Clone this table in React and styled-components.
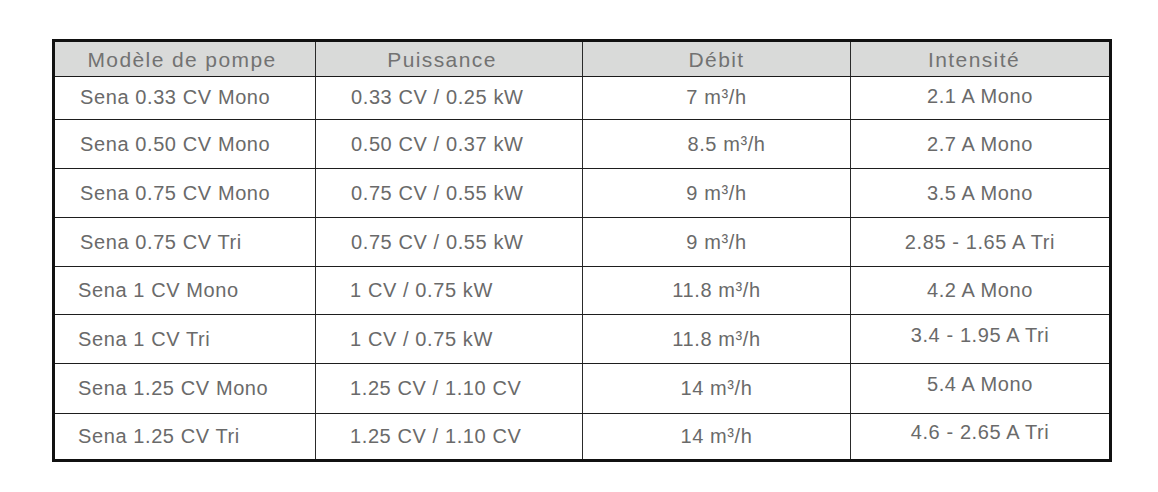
import React from "react";
import styled, { createGlobalStyle } from "styled-components";

const GlobalStyle = createGlobalStyle`
  html, body {
    margin: 0;
    padding: 0;
    background: #ffffff;
  }
  body {
    font-family: "Liberation Sans", Arial, Helvetica, sans-serif;
  }
`;

const Page = styled.div`
  width: 1158px;
  height: 492px;
  padding: 39px 0 0 52px;
  box-sizing: border-box;
  background: #ffffff;
`;

const Table = styled.table`
  width: 1057px;
  border-collapse: collapse;
  table-layout: fixed;
  border: 3px solid #111111;
  color: #6a6a6a;
`;

const HeadRow = styled.tr`
  height: 36px;
  background: #d9dad9;
`;

const Th = styled.th`
  font-weight: 400;
  font-size: 21px;
  letter-spacing: 1.4px;
  color: #727272;
  text-align: center;
  padding: 1px ${(p) => p.$shift || 0}px 0 0;
  border-right: 1.5px solid #2a2a2a;
  border-bottom: 1.5px solid #1a1a1a;
  white-space: nowrap;
`;

const Row = styled.tr`
  height: ${(p) => p.$h}px;
`;

const Td = styled.td`
  font-size: 20px;
  letter-spacing: 0.6px;
  text-align: ${(p) => p.$align || "center"};
  padding: 0 0 ${(p) => (p.$raise ? p.$raise * 2 : 0)}px
    ${(p) => p.$pad || 0}px;
  border-right: 1.5px solid #2a2a2a;
  border-bottom: 1.5px solid #1e1e1e;
  white-space: nowrap;
  vertical-align: middle;
`;

const rows = [
  { h: 43, model: "Sena 0.33 CV Mono", power: "0.33 CV / 0.25 kW", flow: "7 m³/h", amp: "2.1 A Mono", up: 2 },
  { h: 49, model: "Sena 0.50 CV Mono", power: "0.50 CV / 0.37 kW", flow: "8.5 m³/h", amp: "2.7 A Mono", flowShift: 20 },
  { h: 49, model: "Sena 0.75 CV Mono", power: "0.75 CV / 0.55 kW", flow: "9 m³/h", amp: "3.5 A Mono" },
  { h: 49, model: "Sena 0.75 CV Tri", power: "0.75 CV / 0.55 kW", flow: "9 m³/h", amp: "2.85 - 1.65 A Tri", flowDrop: 2 },
  { h: 48, model: "Sena 1 CV Mono", power: "1 CV / 0.75 kW", flow: "11.8 m³/h", amp: "4.2 A Mono", tight: true },
  { h: 49, model: "Sena 1 CV Tri", power: "1 CV / 0.75 kW", flow: "11.8 m³/h", amp: "3.4 - 1.95 A Tri", ampRaise: 4, tight: true },
  { h: 50, model: "Sena 1.25 CV Mono", power: "1.25 CV / 1.10 CV", flow: "14 m³/h", amp: "5.4 A Mono", ampRaise: 4, tight: true },
  { h: 47, model: "Sena 1.25 CV Tri", power: "1.25 CV / 1.10 CV", flow: "14 m³/h", amp: "4.6 - 2.65 A Tri", ampRaise: 4, tight: true },
];

export default function App() {
  return (
    <>
      <GlobalStyle />
      <Page>
        <Table>
          <colgroup>
            <col style={{ width: 262 }} />
            <col style={{ width: 267 }} />
            <col style={{ width: 268 }} />
            <col style={{ width: 260 }} />
          </colgroup>
          <thead>
            <HeadRow>
              <Th $shift={6}>Modèle de pompe</Th>
              <Th $shift={14}>Puissance</Th>
              <Th>Débit</Th>
              <Th $shift={12}>Intensité</Th>
            </HeadRow>
          </thead>
          <tbody>
            {rows.map((r) => (
              <Row key={r.model} $h={r.h}>
                <Td $align="left" $pad={r.tight ? 23 : 25} $raise={r.up ? 1 : 0}>
                  {r.model}
                </Td>
                <Td $align="left" $pad={r.tight ? 34 : 35} $raise={r.up ? 1 : 0}>
                  {r.power}
                </Td>
                <Td
                  $pad={r.flowShift || 0}
                  $raise={r.flowDrop ? -1 : r.up ? 1 : 0}
                >
                  {r.flow}
                </Td>
                <Td $raise={r.ampRaise || r.up || 0}>{r.amp}</Td>
              </Row>
            ))}
          </tbody>
        </Table>
      </Page>
    </>
  );
}
